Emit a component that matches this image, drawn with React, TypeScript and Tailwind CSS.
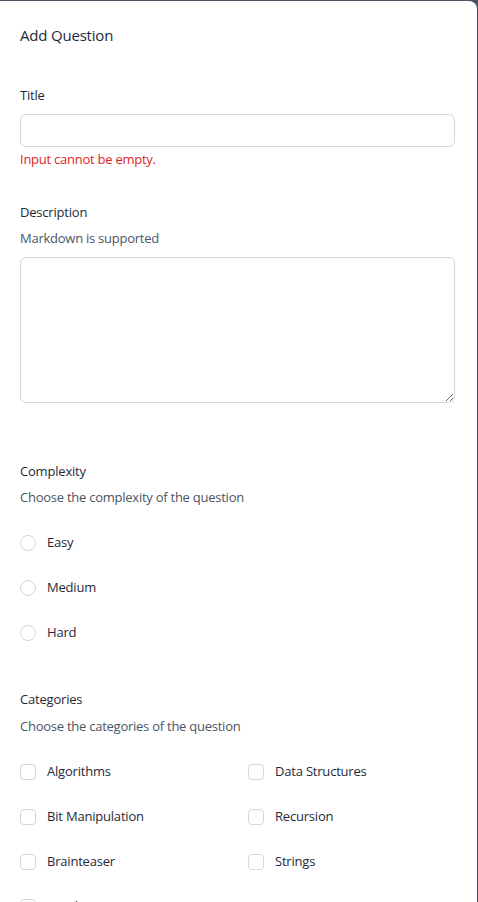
import React from "react";

const complexities = ["Easy", "Medium", "Hard"];
const categories = [
  "Algorithms",
  "Data Structures",
  "Bit Manipulation",
  "Recursion",
  "Brainteaser",
  "Strings",
  "Databases",
];

function Radio({ label }: { label: string }) {
  return (
    <label className="flex h-[20px] items-center gap-[11px]">
      <span className="h-[16px] w-[16px] shrink-0 rounded-full border border-[#d5d7de] bg-white" />
      <span className="text-[13px] font-medium tracking-[-0.2px] text-[#1f2937]">{label}</span>
    </label>
  );
}

function Checkbox({ label }: { label: string }) {
  return (
    <label className="flex h-[20px] items-center gap-[11px]">
      <span className="h-[16px] w-[16px] shrink-0 rounded-[4px] border border-[#d5d7de] bg-white" />
      <span className="text-[13px] font-medium tracking-[-0.2px] text-[#1f2937]">{label}</span>
    </label>
  );
}

export default function App() {
  return (
    <div
      className="h-[902px] w-[478px] overflow-hidden bg-[#4b5262] pt-px"
      style={{ fontFamily: '"Open Sans", "Noto Sans", sans-serif' }}
    >
      <div className="min-h-[901px] w-[477px] rounded-tr-lg bg-white pl-5 pr-[22px]">
        <h2 className="pt-[24px] text-[15px] font-medium leading-[20px] tracking-[-0.2px] text-[#1f2937]">
          Add Question
        </h2>

        {/* Title */}
        <div className="mt-[40px]">
          <p className="text-[13px] font-medium leading-[20px] tracking-[-0.2px] text-[#1f2937]">Title</p>
          <input className="mt-[9px] block h-[33px] w-full rounded-[6px] border border-[#d5d7de] bg-white" />
          <p className="mt-[2px] text-[13px] leading-[20px] tracking-[-0.25px] text-[#dc2626]">Input cannot be empty.</p>
        </div>

        {/* Description */}
        <div className="mt-[33px]">
          <p className="text-[13px] font-medium leading-[20px] tracking-[-0.2px] text-[#1f2937]">Description</p>
          <p className="mt-[6px] text-[13px] leading-[20px] tracking-[-0.25px] text-[#4b5563]">Markdown is supported</p>
          <textarea className="mt-[9px] block h-[146px] w-full rounded-[6px] border border-[#d5d7de] bg-white" />
        </div>

        {/* Complexity */}
        <div className="mt-[58px]">
          <p className="text-[13px] font-medium leading-[20px] tracking-[-0.2px] text-[#1f2937]">Complexity</p>
          <p className="mt-[6px] text-[13px] leading-[20px] tracking-[-0.25px] text-[#4b5563]">
            Choose the complexity of the question
          </p>
          <div className="mt-[26px] flex flex-col gap-[25px]">
            {complexities.map((c) => (
              <Radio key={c} label={c} />
            ))}
          </div>
        </div>

        {/* Categories */}
        <div className="mt-[46px]">
          <p className="text-[13px] font-medium leading-[20px] tracking-[-0.2px] text-[#1f2937]">Categories</p>
          <p className="mt-[7px] text-[13px] leading-[20px] tracking-[-0.25px] text-[#4b5563]">
            Choose the categories of the question
          </p>
          <div className="mt-[26px] grid grid-cols-[228px_1fr] gap-y-[25px]">
            {categories.map((c) => (
              <Checkbox key={c} label={c} />
            ))}
          </div>
        </div>
      </div>
    </div>
  );
}
